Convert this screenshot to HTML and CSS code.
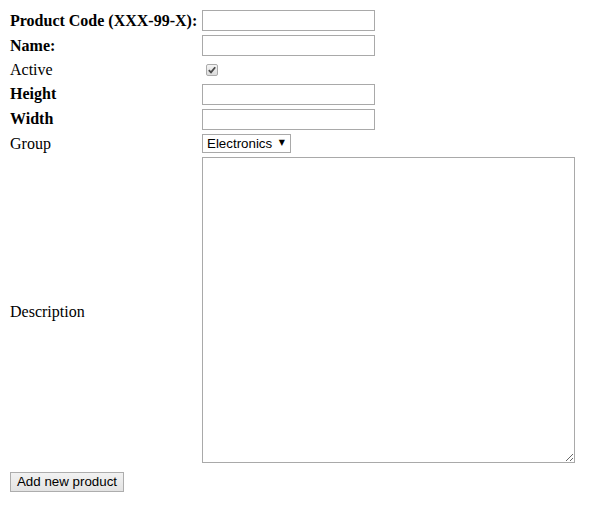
FILE: index.html
```html
<!DOCTYPE html>
<html>
<head>
<meta charset="utf-8">
<link rel="stylesheet" href="styles.css">
</head>
<body>
<form class="product-form">
  <div class="grid">
    <label class="lbl bold">Product Code (XXX-99-X):</label>
    <input class="txt" type="text">
    <label class="lbl bold">Name:</label>
    <input class="txt" type="text">
    <label class="lbl">Active</label>
    <span class="check-cell"><span class="chk" role="checkbox" aria-checked="true"><svg width="8" height="8" viewBox="0 0 8 8"><path d="M0.8 4.2 L3 6.4 L7.2 1.2" fill="none" stroke="#4a4a4a" stroke-width="1.8"/></svg></span></span>
    <label class="lbl bold tight">Height</label>
    <input class="txt" type="text">
    <label class="lbl bold tight">Width</label>
    <input class="txt" type="text">
    <label class="lbl">Group</label>
    <span class="select-wrap"><select class="sel"><option>Electronics</option></select></span>
    <label class="lbl desc">Description</label>
    <textarea class="area"></textarea>
  </div>
  <button class="btn" type="button">Add new product</button>
</form>
</body>
</html>
```
FILE: styles.css
```css
html, body {
  margin: 0;
  padding: 0;
  background: #fff;
}
body {
  font-family: "Liberation Serif", "Times New Roman", serif;
  font-size: 16px;
  color: #000;
}
.product-form {
  padding: 10px 0 0 10px;
}
.grid {
  display: grid;
  grid-template-columns: 192px auto;
  grid-template-rows: 21px 21px 20px 21px 21px 19px 306px;
  row-gap: 4px;
  align-items: center;
  justify-items: start;
}
.lbl {
  line-height: 18px;
}
.bold {
  font-weight: bold;
}
.tight {
  padding-bottom: 1px;
}
.desc {
  padding-top: 3px;
}
.txt {
  box-sizing: border-box;
  width: 173px;
  height: 21px;
  margin: 0;
  border: 1px solid #a9a9a9;
  padding: 1px 2px;
  font: 13.33px "Liberation Sans", Arial, sans-serif;
  background: #fff;
}
.check-cell {
  display: flex;
  align-items: center;
  height: 20px;
  padding-left: 4px;
}
.chk {
  box-sizing: border-box;
  display: flex;
  align-items: center;
  justify-content: center;
  width: 12px;
  height: 12px;
  margin-top: -1px;
  border: 1px solid #ababab;
  border-radius: 2px;
  background: linear-gradient(#f4f4f4, #dcdcdc);
}
.chk svg {
  display: block;
}
.select-wrap {
  position: relative;
  display: inline-block;
  height: 19px;
}
.select-wrap::after {
  content: "\25BC";
  position: absolute;
  right: 6px;
  top: 4px;
  font: 8px "DejaVu Sans", sans-serif;
  color: #000;
  pointer-events: none;
}
.sel {
  appearance: none;
  -webkit-appearance: none;
  box-sizing: border-box;
  height: 19px;
  width: 89px;
  margin: 0;
  padding: 0 0 0 4px;
  border: 1px solid #a9a9a9;
  border-radius: 0;
  background: #fff;
  color: #000;
  font: 13.33px "Liberation Sans", Arial, sans-serif;
}
.area {
  box-sizing: border-box;
  width: 373px;
  height: 306px;
  margin: 0;
  border: 1px solid #a9a9a9;
  padding: 2px;
  resize: both;
  font: 13.33px "Liberation Mono", monospace;
}
.btn {
  box-sizing: border-box;
  display: block;
  margin: 9px 0 0 0;
  width: 114px;
  height: 20px;
  padding: 0 0 2px 0;
  border: 1px solid #adadad;
  border-radius: 0;
  background: linear-gradient(#f2f2f2, #e3e3e3);
  color: #000;
  white-space: nowrap;
  text-align: center;
  font: 13.33px "Liberation Sans", Arial, sans-serif;
}
```
